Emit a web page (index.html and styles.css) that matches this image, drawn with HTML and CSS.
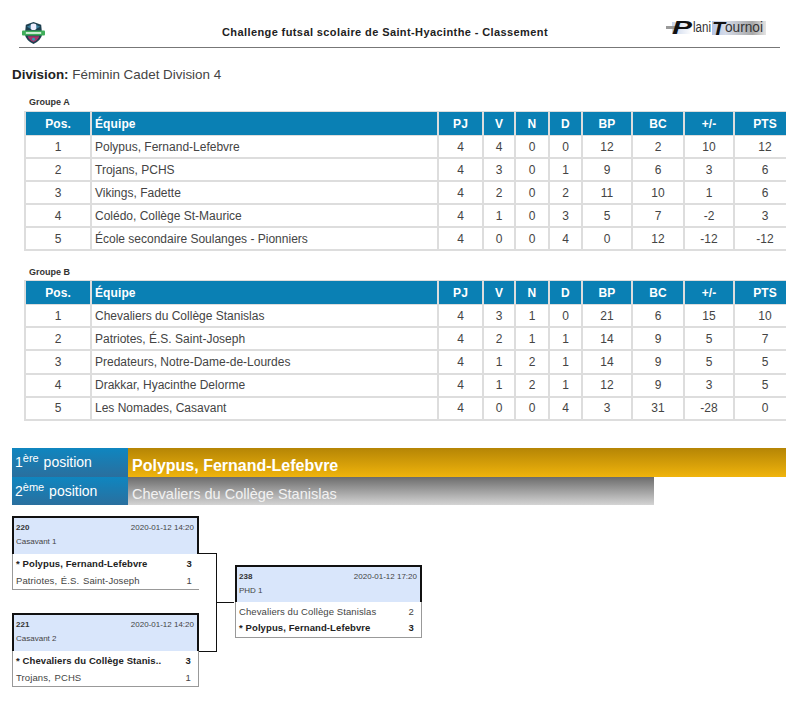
FILE: index.html
```html
<!DOCTYPE html>
<html lang="fr">
<head>
<meta charset="utf-8">
<title>Classement</title>
<link rel="stylesheet" href="styles.css">
</head>
<body>
<header class="top">
  <svg class="logo" viewBox="0 0 24 24" width="23" height="23" aria-hidden="true">
    <path d="M12 1 L20 4 L21 14 Q20 20 12 24 Q4 20 3 14 L4 4 Z" fill="#1d3f4f"/>
    <circle cx="12" cy="6" r="3.5" fill="#eef"/>
    <path d="M5 6 L9 4 L9 8 Z M19 6 L15 4 L15 8 Z" fill="#3a7f9f"/>
    <rect x="0" y="10" width="24" height="5" rx="1" fill="#3fae5a"/>
    <rect x="4" y="11.5" width="16" height="2" fill="#cfeed6"/>
    <path d="M6 16 H18 Q17 20 12 22 Q7 20 6 16 Z" fill="#a8336b"/>
    <circle cx="12" cy="19" r="1.5" fill="#2a9fb0"/>
  </svg>
  <h1 class="title">Challenge futsal scolaire de Saint-Hyacinthe - Classement</h1>
  <svg class="brand" viewBox="0 -2 102 20" width="102" height="20" aria-hidden="true">
    <defs>
      <linearGradient id="fade" x1="0" x2="1" y1="0" y2="0">
        <stop offset="0" stop-color="#c8d4ea"/><stop offset="1" stop-color="#ffffff"/>
      </linearGradient>
      <linearGradient id="fade2" x1="0" x2="1" y1="0" y2="0">
        <stop offset="0" stop-color="#b5c6e8"/><stop offset="0.25" stop-color="#d5dbe8"/><stop offset="0.75" stop-color="#a8a8a8"/><stop offset="1" stop-color="#e4e4e4"/>
      </linearGradient>
    </defs>
    <rect x="6" y="2" width="20" height="12" fill="url(#fade)"/>
    <rect x="0" y="6" width="14" height="3" fill="#9a9a9a"/>
    <rect x="46" y="1" width="54" height="14" fill="url(#fade2)"/>
    <text x="6" y="14" class="brand-cap" textLength="20" lengthAdjust="spacingAndGlyphs">P</text>
    <text x="27" y="12" class="brand-low" textLength="18" lengthAdjust="spacingAndGlyphs">lani</text>
    <text x="46" y="15" class="brand-cap" textLength="13" lengthAdjust="spacingAndGlyphs">T</text>
    <text x="59" y="12" class="brand-low" textLength="38" lengthAdjust="spacingAndGlyphs">ournoi</text>
  </svg>
</header>

<p class="division"><b>Division:</b> Féminin Cadet Division 4</p>

<section class="group">
  <h2 class="group-name">Groupe A</h2>
  <div class="clip">
  <table class="standings">
    <colgroup><col class="c-pos"><col class="c-team"><col class="c-pj"><col class="c-v"><col class="c-n"><col class="c-d"><col class="c-bp"><col class="c-bc"><col class="c-diff"><col class="c-pts"></colgroup>
    <thead><tr><th>Pos.</th><th class="left">Équipe</th><th>PJ</th><th>V</th><th>N</th><th>D</th><th>BP</th><th>BC</th><th>+/-</th><th>PTS</th></tr></thead>
    <tbody>
      <tr><td>1</td><td class="left">Polypus, Fernand-Lefebvre</td><td>4</td><td>4</td><td>0</td><td>0</td><td>12</td><td>2</td><td>10</td><td>12</td></tr>
      <tr><td>2</td><td class="left">Trojans, PCHS</td><td>4</td><td>3</td><td>0</td><td>1</td><td>9</td><td>6</td><td>3</td><td>6</td></tr>
      <tr><td>3</td><td class="left">Vikings, Fadette</td><td>4</td><td>2</td><td>0</td><td>2</td><td>11</td><td>10</td><td>1</td><td>6</td></tr>
      <tr><td>4</td><td class="left">Colédo, Collège St-Maurice</td><td>4</td><td>1</td><td>0</td><td>3</td><td>5</td><td>7</td><td>-2</td><td>3</td></tr>
      <tr><td>5</td><td class="left">École secondaire Soulanges - Pionniers</td><td>4</td><td>0</td><td>0</td><td>4</td><td>0</td><td>12</td><td>-12</td><td>-12</td></tr>
    </tbody>
  </table>
  </div>
</section>

<section class="group group-b">
  <h2 class="group-name">Groupe B</h2>
  <div class="clip">
  <table class="standings">
    <colgroup><col class="c-pos"><col class="c-team"><col class="c-pj"><col class="c-v"><col class="c-n"><col class="c-d"><col class="c-bp"><col class="c-bc"><col class="c-diff"><col class="c-pts"></colgroup>
    <thead><tr><th>Pos.</th><th class="left">Équipe</th><th>PJ</th><th>V</th><th>N</th><th>D</th><th>BP</th><th>BC</th><th>+/-</th><th>PTS</th></tr></thead>
    <tbody>
      <tr><td>1</td><td class="left">Chevaliers du Collège Stanislas</td><td>4</td><td>3</td><td>1</td><td>0</td><td>21</td><td>6</td><td>15</td><td>10</td></tr>
      <tr><td>2</td><td class="left">Patriotes, É.S. Saint-Joseph</td><td>4</td><td>2</td><td>1</td><td>1</td><td>14</td><td>9</td><td>5</td><td>7</td></tr>
      <tr><td>3</td><td class="left">Predateurs, Notre-Dame-de-Lourdes</td><td>4</td><td>1</td><td>2</td><td>1</td><td>14</td><td>9</td><td>5</td><td>5</td></tr>
      <tr><td>4</td><td class="left">Drakkar, Hyacinthe Delorme</td><td>4</td><td>1</td><td>2</td><td>1</td><td>12</td><td>9</td><td>3</td><td>5</td></tr>
      <tr><td>5</td><td class="left">Les Nomades, Casavant</td><td>4</td><td>0</td><td>0</td><td>4</td><td>3</td><td>31</td><td>-28</td><td>0</td></tr>
    </tbody>
  </table>
  </div>
</section>

<section class="podium">
  <div class="podium-row">
    <div class="podium-label">1<sup>ère</sup> position</div>
    <div class="podium-team gold">Polypus, Fernand-Lefebvre</div>
  </div>
  <div class="podium-row">
    <div class="podium-label">2<sup>ème</sup> position</div>
    <div class="podium-team silver">Chevaliers du Collège Stanislas</div>
  </div>
</section>

<section class="bracket">
  <div class="round">
    <article class="match">
      <div class="match-head"><div class="match-line"><b>220</b><span>2020-01-12 14:20</span></div><div class="match-place">Casavant 1</div></div>
      <div class="match-body open-right">
        <div class="team win"><span>* Polypus, Fernand-Lefebvre</span><span class="score">3</span></div>
        <div class="team"><span>Patriotes, É.S. Saint-Joseph</span><span class="score">1</span></div>
      </div>
    </article>
    <article class="match">
      <div class="match-head"><div class="match-line"><b>221</b><span>2020-01-12 14:20</span></div><div class="match-place">Casavant 2</div></div>
      <div class="match-body">
        <div class="team win"><span>* Chevaliers du Collège Stanis..</span><span class="score">3</span></div>
        <div class="team"><span>Trojans, PCHS</span><span class="score">1</span></div>
      </div>
    </article>
  </div>
  <div class="connector"></div>
  <article class="match final">
    <div class="match-head"><div class="match-line"><b>238</b><span>2020-01-12 17:20</span></div><div class="match-place">PHD 1</div></div>
    <div class="match-body">
      <div class="team"><span>Chevaliers du Collège Stanislas</span><span class="score">2</span></div>
      <div class="team win"><span>* Polypus, Fernand-Lefebvre</span><span class="score">3</span></div>
    </div>
  </article>
</section>
</body>
</html>
```

FILE: styles.css
```css
* { box-sizing: border-box; }
html, body { margin: 0; padding: 0; }
body {
  width: 800px;
  height: 708px;
  overflow: hidden;
  background: #fff;
  color: #444;
  font-family: "Liberation Sans", Arial, sans-serif;
  padding-top: 20px;
}

.top {
  height: 28px;
  margin: 0 20px 0 19px;
  border-bottom: 1px solid #777;
  display: flex;
  align-items: flex-start;
  position: relative;
}
.logo { margin: 1px 0 0 3px; flex: none; }
.title {
  margin: 5px 0 0 177px;
  font-size: 11px;
  line-height: 14px;
  font-weight: bold;
  letter-spacing: 0.4px;
  color: #222;
  white-space: nowrap;
}
.brand { position: absolute; left: 647px; top: -2px; }
.brand-cap { font: italic bold 18px "Liberation Sans", sans-serif; fill: #111; }
.brand-low { font: 14px "Liberation Sans", sans-serif; fill: #333; }

.division {
  margin: 18px 0 0 12px;
  font-size: 13.4px;
  line-height: 18px;
  color: #444;
}
.division b { color: #222; }

.group { margin: 13px 14px 0 24px; }
.group-b { margin-top: 16px; }
.group-name {
  margin: 0 0 3px 5px;
  font-size: 9px;
  line-height: 11px;
  font-weight: bold;
  color: #333;
}
.group-b .group-name { margin-bottom: 2px; }
.clip { overflow: hidden; }

.standings {
  width: 771px;
  table-layout: fixed;
  border-collapse: separate;
  border-spacing: 0;
  font-size: 12px;
}
.c-pos { width: 66px; }
.c-team { width: 347px; }
.c-pj { width: 45px; }
.c-v { width: 32px; }
.c-n { width: 34px; }
.c-d { width: 33px; }
.c-bp { width: 50px; }
.c-bc { width: 52px; }
.c-diff { width: 50px; }
.c-pts { width: 62px; }

.standings th {
  height: 25px;
  padding: 0;
  background: #0a80b4;
  color: #fff;
  font-size: 12px;
  font-weight: bold;
  text-align: center;
  border-top: 1px solid #ddd;
  border-bottom: 1px solid #ddd;
  border-left: 2px solid #ddd;
  letter-spacing: 0.1px;
}
.standings td {
  height: 23px;
  padding: 0;
  text-align: center;
  border-bottom: 2px solid #ddd;
  border-left: 2px solid #ddd;
}
.standings .left { text-align: left; padding-left: 3px; }
.group-b .standings td { height: 23.2px; }

.podium { margin: 27px 14px 0 12px; }
.podium-row { display: flex; height: 29px; }
.podium-row + .podium-row { height: 28px; }
.podium-label {
  width: 116px;
  flex: none;
  padding: 3px 0 0 3px;
  background: linear-gradient(#0f86c0, #2a6f9e);
  color: #fff;
  font-size: 14px;
  line-height: 22px;
}
.podium-label sup { font-size: 11px; line-height: 0; vertical-align: 5px; margin-right: 1px; }
.podium-team {
  padding: 7px 0 0 4px;
  color: #fff;
  font-size: 14.5px;
  line-height: 22px;
}
.gold {
  width: 658px;
  font-size: 16px;
  font-weight: bold;
  background: linear-gradient(#b58505, #f0b40c);
}
.silver {
  width: 526px;
  padding-top: 6px;
  background: linear-gradient(#6c6c6c, #d4d4d4);
  color: #f2f2f2;
}

.bracket {
  margin: 11px 0 0 12px;
  display: flex;
  align-items: flex-start;
  position: relative;
}
.round { display: flex; flex-direction: column; gap: 23px; width: 187px; flex: none; }
.match { width: 187px; flex: none; }
.match-head {
  height: 38px;
  padding: 4px 3px 0 2px;
  background: #d9e6fb;
  border: 2px solid #111;
  border-bottom: 0;
  font-size: 8px;
  color: #444;
}
.match-line { display: flex; justify-content: space-between; line-height: 12px; }
.match-line b { color: #333; }
.match-place { margin-top: 2px; line-height: 12px; }
.match-body {
  height: 36px;
  padding: 1px 0 0 3px;
  border: 1px solid #999;
  border-top: 0;
  font-size: 9.5px;
}
.open-right { border-left: 1px solid #999; border-right: 0; }
.team {
  display: flex;
  justify-content: space-between;
  height: 17px;
  line-height: 17px;
  padding-right: 7px;
  white-space: nowrap;
  letter-spacing: 0.1px;
  word-spacing: 1px;
}
.team.win { font-weight: bold; color: #222; word-spacing: 0; }

.connector {
  width: 18px;
  height: 99px;
  margin-top: 37px;
  border: 1px solid #111;
  border-left: 0;
  position: relative;
  flex: none;
}
.connector::after {
  content: "";
  position: absolute;
  left: 17px;
  top: 48px;
  width: 18px;
  height: 1px;
  background: #111;
}
.final { margin: 49px 0 0 18px; }
.final .match-head { height: 37px; }
.final .match-body { padding-top: 2px; }
.final .team { height: 16px; line-height: 16px; word-spacing: 0; }
```
